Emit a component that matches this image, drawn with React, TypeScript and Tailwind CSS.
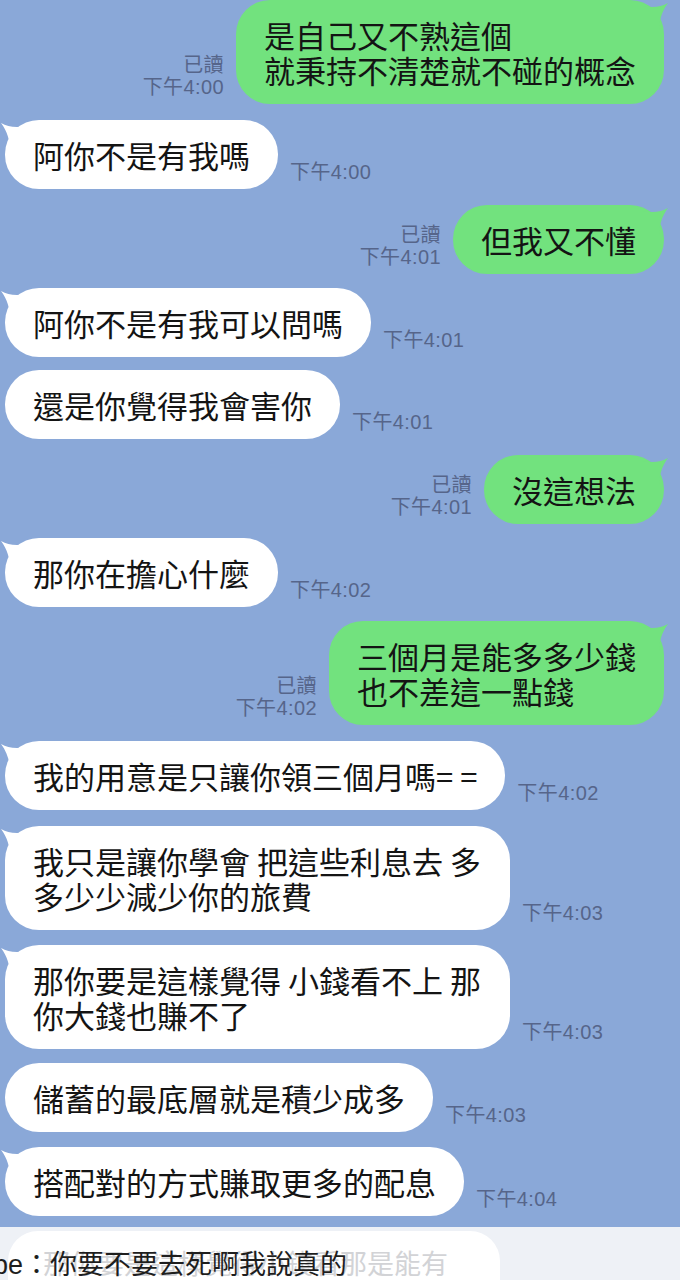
import React from 'react';

type Msg = {
  me: boolean;
  lines: string[];
  time: string;
  mt: string;
  tail: boolean;
  wide?: boolean;
};

const messages: Msg[] = [
  { me: true, lines: ['是自己又不熟這個', '就秉持不清楚就不碰的概念'], time: '下午4:00', mt: 'mt-0', tail: true },
  { me: false, lines: ['阿你不是有我嗎'], time: '下午4:00', mt: 'mt-[16px]', tail: true },
  { me: true, lines: ['但我又不懂'], time: '下午4:01', mt: 'mt-[16px]', tail: true },
  { me: false, lines: ['阿你不是有我可以問嗎'], time: '下午4:01', mt: 'mt-[14px]', tail: true },
  { me: false, lines: ['還是你覺得我會害你'], time: '下午4:01', mt: 'mt-[13px]', tail: false },
  { me: true, lines: ['沒這想法'], time: '下午4:01', mt: 'mt-[16px]', tail: true },
  { me: false, lines: ['那你在擔心什麼'], time: '下午4:02', mt: 'mt-[14px]', tail: true },
  { me: true, lines: ['三個月是能多多少錢', '也不差這一點錢'], time: '下午4:02', mt: 'mt-[14px]', tail: true },
  { me: false, lines: ['我的用意是只讓你領三個月嗎= ='], time: '下午4:02', mt: 'mt-[16px]', tail: true },
  { me: false, lines: ['我只是讓你學會 把這些利息去 多', '多少少減少你的旅費'], time: '下午4:03', mt: 'mt-[16px]', tail: true, wide: true },
  { me: false, lines: ['那你要是這樣覺得 小錢看不上 那', '你大錢也賺不了'], time: '下午4:03', mt: 'mt-[15px]', tail: true, wide: true },
  { me: false, lines: ['儲蓄的最底層就是積少成多'], time: '下午4:03', mt: 'mt-[14px]', tail: false },
  { me: false, lines: ['搭配對的方式賺取更多的配息'], time: '下午4:04', mt: 'mt-[15px]', tail: true },
];

const LeftTail = () => (
  <svg className="absolute left-[-5px] top-[2px]" width="28" height="30" viewBox="0 0 28 30">
    <path d="M1 1 C8 5 16 6 27 4 L27 29 L10 29 C10 18 7 9 1 1 Z" fill="#ffffff" />
  </svg>
);

const RightTail = () => (
  <svg className="absolute right-[-5px] top-[2px]" width="28" height="30" viewBox="0 0 28 30">
    <path d="M27 1 C20 5 12 6 1 4 L1 29 L18 29 C18 18 21 9 27 1 Z" fill="#72e27e" />
  </svg>
);

const Meta = ({ me, time }: { me: boolean; time: string }) => (
  <div
    className={`mb-[6px] text-[20px] leading-[22px] tracking-[0.4px] text-[#56658a] ${me ? 'text-right' : 'text-left'}`}
    style={{ fontFamily: '"Liberation Sans", "Noto Sans CJK TC", sans-serif' }}
  >
    {me && <div>已讀</div>}
    <div>{time}</div>
  </div>
);

const Bubble = ({ msg }: { msg: Msg }) => (
  <div
    className={`relative rounded-[34px] px-[28px] py-[17px] text-[31px] leading-[35px] text-[#141414] ${
      msg.me ? 'bg-[#72e27e]' : 'bg-white'
    } ${msg.wide ? 'w-[505px]' : ''}`}
  >
    {msg.tail && (msg.me ? <RightTail /> : <LeftTail />)}
    <div className="relative whitespace-nowrap">
      {msg.lines.map((l, i) => (
        <div key={i}>{l}</div>
      ))}
    </div>
  </div>
);

export default function App() {
  return (
    <div
      className="relative flex h-[1280px] w-[680px] flex-col overflow-hidden bg-[#8aa8d8]"
      style={{ fontFamily: '"Noto Sans CJK TC", "Noto Sans", sans-serif' }}
    >
      {messages.map((m, i) => (
        <div
          key={i}
          className={`flex items-end gap-[12px] ${m.mt} ${m.me ? 'justify-end pr-[16px]' : 'justify-start pl-[5px]'}`}
        >
          {m.me ? (
            <>
              <Meta me time={m.time} />
              <Bubble msg={m} />
            </>
          ) : (
            <>
              <Bubble msg={m} />
              <Meta me={false} time={m.time} />
            </>
          )}
        </div>
      ))}

      <div
        className="relative mt-[11px] flex-1 bg-[#eef1f6] px-[8px] pt-[4px]"
        style={{ fontFamily: '"Liberation Sans", "Noto Sans CJK TC", sans-serif' }}
      >
        <div className="h-[80px] w-[492px] whitespace-nowrap rounded-[30px] bg-white pl-[35px] pt-[16px] text-[27px] leading-[36px] text-[#d2d3d6]">
          那你要是這樣覺得小錢看那是能有
        </div>
        <div className="absolute left-[-7px] top-[20px] whitespace-nowrap text-[27px] leading-[36px] text-[#1e1e1e]">
          pe：你要不要去死啊我說真的
        </div>
      </div>
    </div>
  );
}
